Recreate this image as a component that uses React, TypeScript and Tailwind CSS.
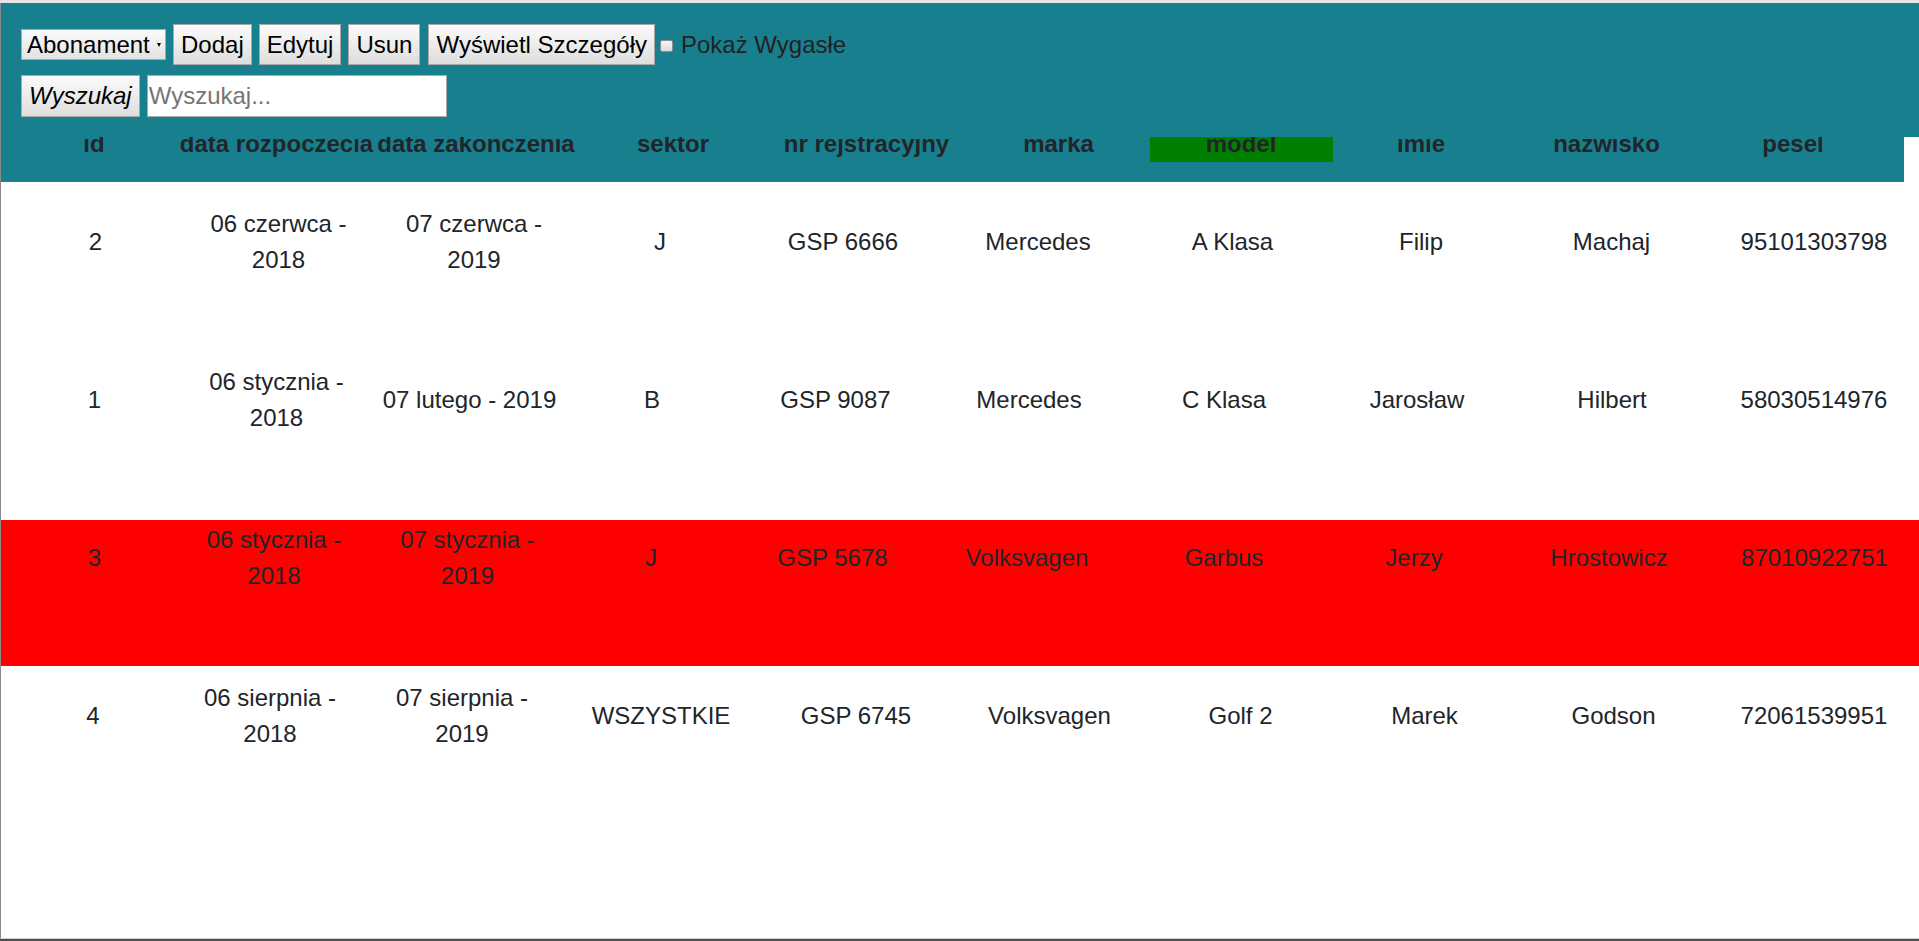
const headers = [
  "id",
  "data rozpoczecia",
  "data zakonczenia",
  "sektor",
  "nr rejstracyjny",
  "marka",
  "model",
  "imie",
  "nazwisko",
  "pesel",
];

const rows = [
  {
    cols: "grid-cols-[189px_177px_214px_158px_208px_182px_207px_170px_211px_194px]",
    bg: "bg-white",
    cells: ["2", "06 czerwca - 2018", "07 czerwca - 2019", "J", "GSP 6666", "Mercedes", "A Klasa", "Filip", "Machaj", "95101303798"],
  },
  {
    cols: "grid-cols-[187px_177px_209px_156px_211px_176px_214px_172px_218px_186px]",
    bg: "bg-white",
    cells: ["1", "06 stycznia - 2018", "07 lutego - 2019", "B", "GSP 9087", "Mercedes", "C Klasa", "Jarosław", "Hilbert", "58030514976"],
  },
  {
    cols: "grid-cols-[187px_172px_215px_152px_211px_178px_216px_164px_226px_185px]",
    bg: "bg-[#ff0000]",
    cells: ["3", "06 stycznia - 2018", "07 stycznia - 2019", "J", "GSP 5678", "Volksvagen", "Garbus", "Jerzy", "Hrostowicz", "87010922751"],
  },
  {
    cols: "grid-cols-[184px_170px_214px_184px_206px_181px_201px_167px_211px_190px]",
    bg: "bg-white",
    cells: ["4", "06 sierpnia - 2018", "07 sierpnia - 2019", "WSZYSTKIE", "GSP 6745", "Volksvagen", "Golf 2", "Marek", "Godson", "72061539951"],
  },
];

const btn =
  "h-[41px] px-[7px] border border-[#a9a9a9] bg-linear-to-b from-[#fbfbfb] to-[#dedede] text-black leading-none";

const App = () => {
  return (
    <div className="h-screen overflow-hidden bg-[#e6e6e6] pt-[3px] font-['Liberation_Sans',Arial,sans-serif] text-[24px] leading-[36px] text-[#212529]">
      <div className="relative h-[936px] overflow-hidden border-l border-l-[#8a8a8a] border-b border-b-[#cfcfcf] bg-white">
        {/* Toolbar lying over the table head */}
        <div className="absolute left-0 right-0 top-0 z-10 h-[134px] bg-[#187f8f] pl-[20px] pt-[21px]">
          <div className="flex items-center gap-[7px]">
            <div className="flex h-[31px] w-[145px] items-center border border-[#a9a9a9] bg-linear-to-b from-[#fbfbfb] to-[#e2e2e2] pl-[5px] text-black leading-none">
              <span>Abonament</span>
              <span className="ml-[7px] mt-[1px] h-0 w-0 border-l-[2.5px] border-r-[2.5px] border-t-[4px] border-l-transparent border-r-transparent border-t-black"></span>
            </div>
            <button className={btn}>Dodaj</button>
            <button className={btn}>Edytuj</button>
            <button className={btn}>Usun</button>
            <button className={`${btn} ml-[1px]`}>Wyświetl Szczegóły</button>
            <label className="ml-[-2px] flex items-center gap-[8px] text-[#222]">
              <span className="mt-[3px] h-[12px] w-[13px] rounded-[2px] border border-[#8d8d8d] bg-linear-to-b from-[#f4f4f4] to-[#dcdcdc]"></span>
              <span>Pokaż Wygasłe</span>
            </label>
          </div>
          <div className="mt-[10px] flex items-center gap-[7px]">
            <button className={`${btn} h-[42px] italic`}>Wyszukaj</button>
            <input
              placeholder="Wyszukaj..."
              className="h-[42px] w-[300px] border border-[#a9a9a9] bg-white pl-[1px] text-black outline-none placeholder:text-[#757575]"
            />
          </div>
        </div>

        {/* Table head */}
        <div className="h-[179px] w-[1903px] bg-[#187f8f] pt-[123px]">
          <div className="grid grid-cols-[186px_179px_220px_174px_213px_171px_194px_166px_205px_168px] font-bold text-[#212529]">
            {headers.map((h) => (
              <div key={h} className="flex justify-center whitespace-nowrap">
                {h === "model" ? (
                  <span className="block h-[36px] w-[183px] shrink-0 bg-[#008000] text-center">{h}</span>
                ) : (
                  <span>{h}</span>
                )}
              </div>
            ))}
          </div>
        </div>

        {/* Rows */}
        <div className="mt-[22px] flex flex-col gap-[12px]">
          {rows.map((r) => (
            <div key={r.cells[0]} className={`h-[146px] overflow-hidden pt-[2px] ${r.bg}`}>
              <div className={`grid items-center ${r.cols}`}>
                {r.cells.map((c, i) => (
                  <div key={i} className="flex justify-center">
                    <span className="max-w-[180px] text-center">{c}</span>
                  </div>
                ))}
              </div>
            </div>
          ))}
        </div>
      </div>
      <div className="h-[2px] bg-[#4f4f4f]"></div>
    </div>
  );
};

export default App;
